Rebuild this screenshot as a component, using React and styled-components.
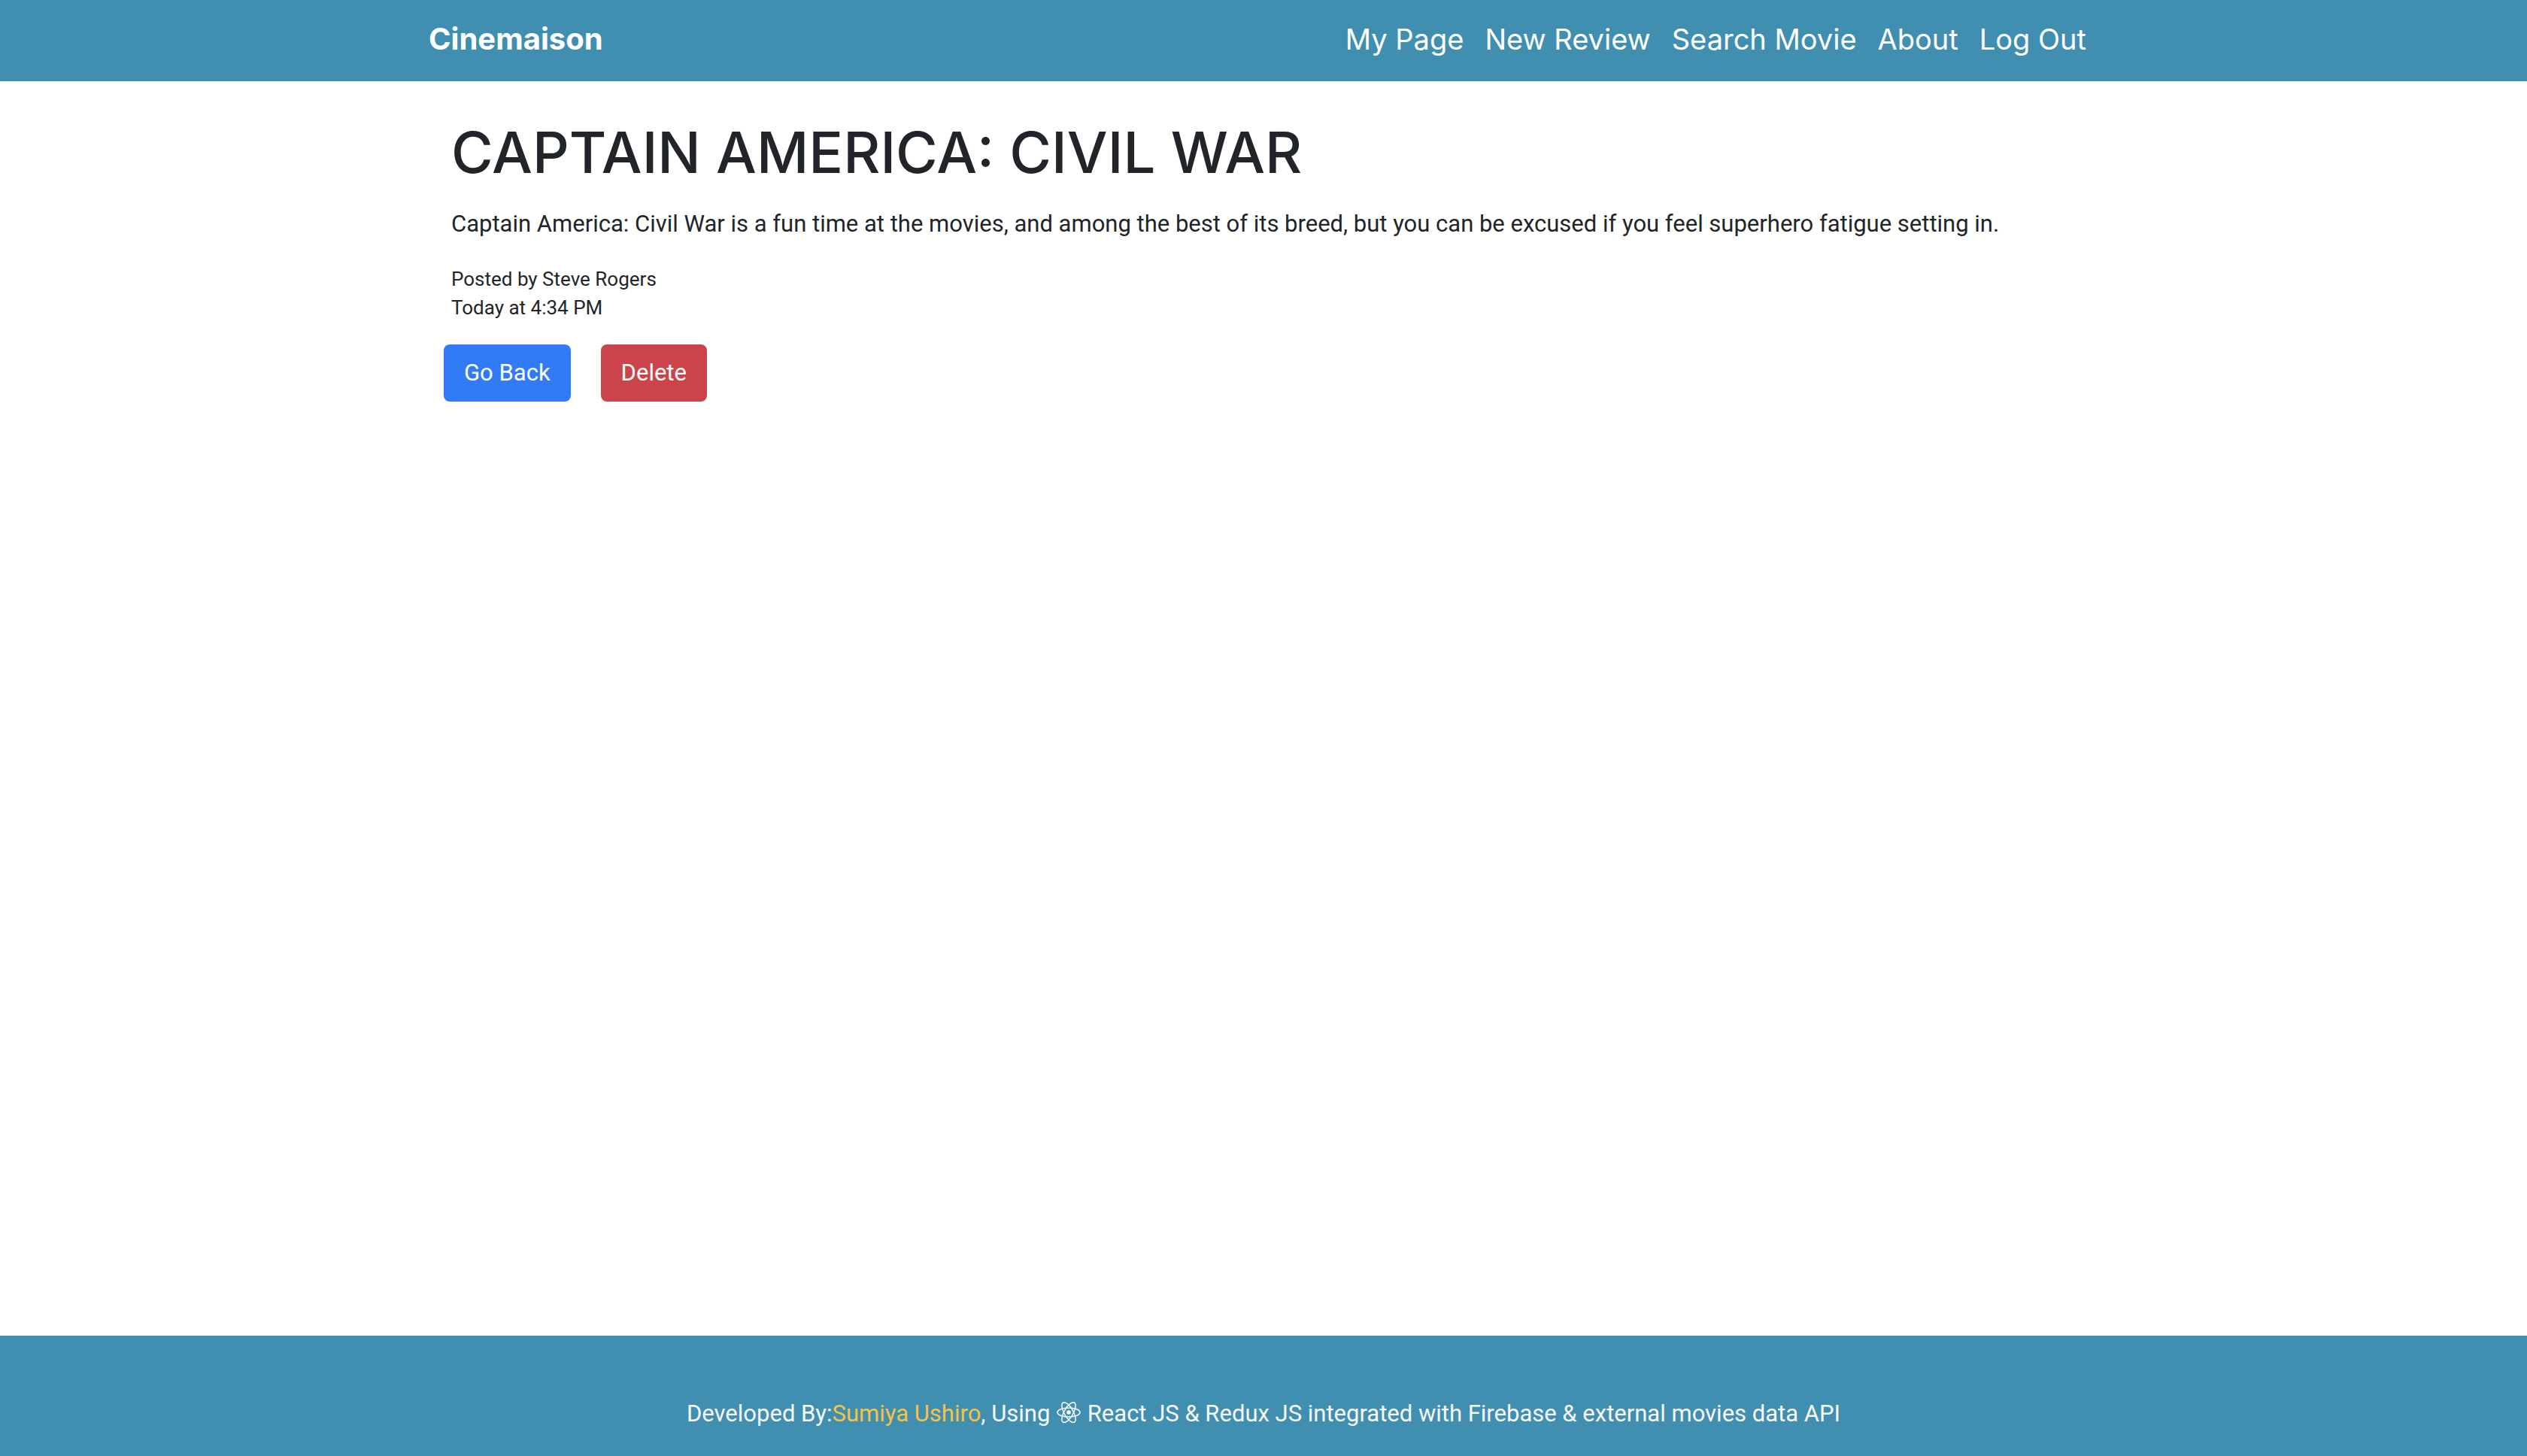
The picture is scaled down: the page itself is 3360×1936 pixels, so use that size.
import React from "react";
import styled, { createGlobalStyle } from "styled-components";

const GlobalStyle = createGlobalStyle`
  *, *::before, *::after { box-sizing: border-box; }
  body {
    margin: 0;
    background: #ffffff;
    color: #212529;
    font-family: Roboto, "Liberation Sans", sans-serif;
    font-size: 31px;
    line-height: 48px;
  }
`;

const Page = styled.div`
  min-height: 100vh;
  display: flex;
  flex-direction: column;
`;

const Header = styled.header`
  padding-bottom: 4px;
  background: #408fb1;
  font-family: Inter, "Liberation Sans", sans-serif;
`;

const Navbar = styled.nav`
  max-width: 2280px;
  margin: 0 auto;
  padding: 28px 46px 28px 30px;
  display: flex;
  align-items: center;
  justify-content: space-between;
`;

const Brand = styled.a`
  color: #ffffff;
  font-size: 40px;
  font-weight: 700;
  text-decoration: none;
`;

const NavList = styled.ul`
  display: flex;
  gap: 28px;
  margin: 0;
  padding: 0;
  list-style: none;
`;

const NavLink = styled.a`
  display: block;
  color: #ffffff;
  font-size: 38px;
  text-decoration: none;
`;

const Main = styled.main`
  flex: 1;
  width: 100%;
  max-width: 2280px;
  margin: 0 auto;
  padding: 46px 60px;
`;

const Title = styled.h1`
  margin: 0 0 24px;
  font-family: Inter, "Liberation Sans", sans-serif;
  font-size: 76px;
  font-weight: 500;
  line-height: 96px;
`;

const Review = styled.p`
  margin: 0 0 30px;
`;

const Meta = styled.div`
  margin-bottom: 30px;
  font-size: 26px;
  line-height: 38px;
`;

const Actions = styled.div`
  display: flex;
  gap: 40px;
  margin-left: -10px;
`;

const Button = styled.button`
  padding: 14px 27px;
  border: 0;
  border-radius: 8px;
  background: ${(p) => (p.$danger ? "#cb444a" : "#317cf6")};
  color: #ffffff;
  font: inherit;
`;

const Footer = styled.footer`
  padding: 80px 32px 32px;
  background: #408fb1;
  color: #f8f9fa;
  text-align: center;
`;

const AuthorLink = styled.a`
  color: #f6c244;
  text-decoration: none;
`;

const Atom = styled.svg`
  width: 32px;
  height: 32px;
  margin: 0 1px;
  vertical-align: -4px;
  fill: none;
  stroke: currentColor;
  stroke-width: 1.5;
`;

const links = ["My Page", "New Review", "Search Movie", "About", "Log Out"];

export default function App() {
  return (
    <Page>
      <GlobalStyle />
      <Header>
        <Navbar>
          <Brand href="#">Cinemaison</Brand>
          <NavList>
            {links.map((label) => (
              <li key={label}>
                <NavLink href="#">{label}</NavLink>
              </li>
            ))}
          </NavList>
        </Navbar>
      </Header>
      <Main>
        <Title>CAPTAIN AMERICA: CIVIL WAR</Title>
        <Review>
          Captain America: Civil War is a fun time at the movies, and among the best of its breed,
          but you can be excused if you feel superhero fatigue setting in.
        </Review>
        <Meta>
          <div>Posted by Steve Rogers</div>
          <div>Today at 4:34 PM</div>
        </Meta>
        <Actions>
          <Button type="button">Go Back</Button>
          <Button type="button" $danger>Delete</Button>
        </Actions>
      </Main>
      <Footer>
        Developed By:<AuthorLink href="#">Sumiya Ushiro</AuthorLink>, Using{" "}
        <Atom viewBox="0 0 32 32" aria-hidden="true">
          <ellipse cx="16" cy="16" rx="15" ry="6" />
          <ellipse cx="16" cy="16" rx="15" ry="6" transform="rotate(60 16 16)" />
          <ellipse cx="16" cy="16" rx="15" ry="6" transform="rotate(120 16 16)" />
          <circle cx="16" cy="16" r="2.8" fill="currentColor" stroke="none" />
        </Atom>{" "}
        React JS &amp; Redux JS integrated with Firebase &amp; external movies data API
      </Footer>
    </Page>
  );
}
